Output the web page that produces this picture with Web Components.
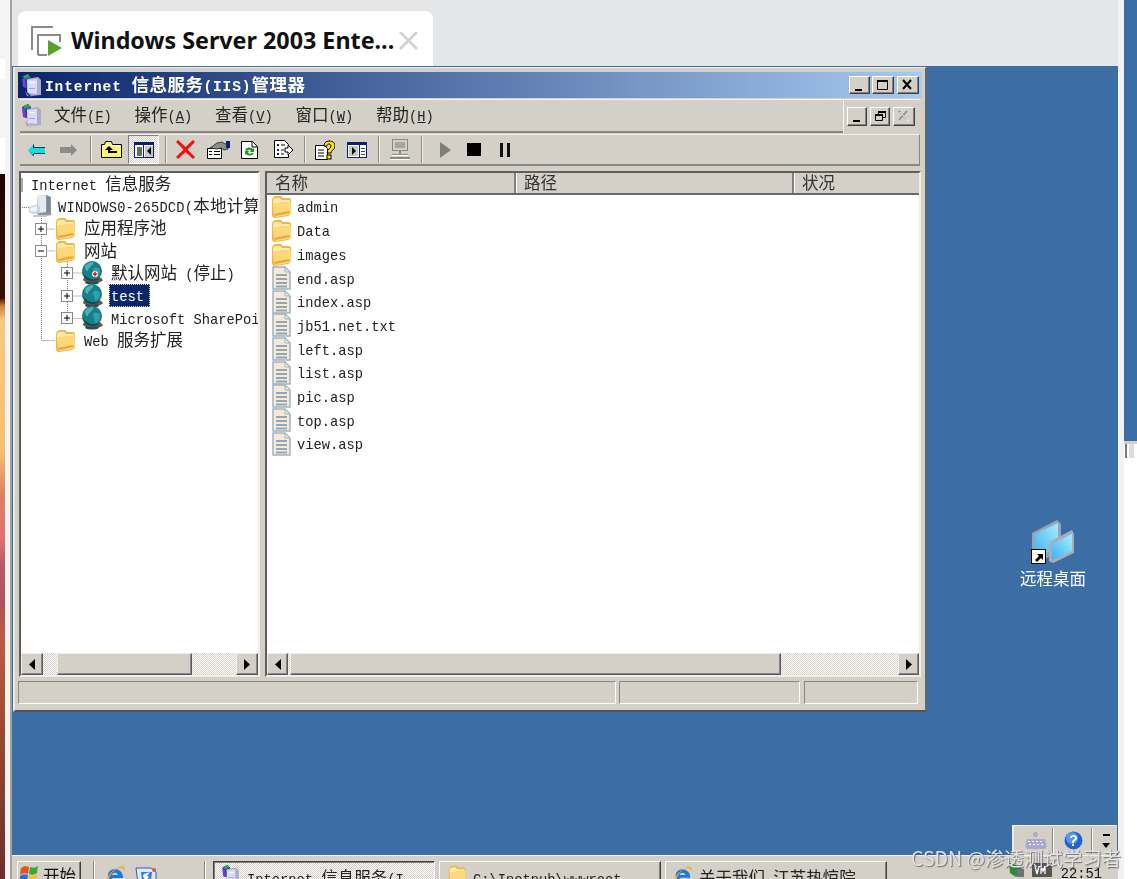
<!doctype html>
<html>
<head>
<meta charset="utf-8">
<title>Windows Server 2003 - IIS</title>
<style>
  html, body { margin: 0; padding: 0; width: 1137px; height: 879px; overflow: hidden; background: #fff; }
</style>
</head>
<body>
<rdp-screen>
  <side-strip slot="left"></side-strip>
  <session-tab slot="top" text="Windows Server 2003 Ente..."></session-tab>
  <win-desktop slot="desktop">
    <win-window>
      <win-titlebar text="Internet 信息服务(IIS)管理器"></win-titlebar>
      <win-menubar>
        <win-menuitem text="文件(&F)" style="margin-left:12px"></win-menuitem>
        <win-menuitem text="操作(&A)"></win-menuitem>
        <win-menuitem text="查看(&V)"></win-menuitem>
        <win-menuitem text="窗口(&W)"></win-menuitem>
        <win-menuitem text="帮助(&H)"></win-menuitem>
      </win-menubar>
      <win-toolbar>
        <win-tool icon="back" style="margin-left:8px"></win-tool>
        <win-tool icon="forward" style="margin-left:15px"></win-tool>
        <win-tool icon="sep" style="margin-left:13px"></win-tool>
        <win-tool icon="up" style="margin-left:9px"></win-tool>
        <win-tool icon="tree" pressed style="margin-left:6px"></win-tool>
        <win-tool icon="sep" style="margin-left:6px"></win-tool>
        <win-tool icon="del" style="margin-left:9px"></win-tool>
        <win-tool icon="props" style="margin-left:12px"></win-tool>
        <win-tool icon="refresh" style="margin-left:11px"></win-tool>
        <win-tool icon="export" style="margin-left:15px"></win-tool>
        <win-tool icon="sep" style="margin-left:11px"></win-tool>
        <win-tool icon="help" style="margin-left:9px"></win-tool>
        <win-tool icon="action" style="margin-left:12px"></win-tool>
        <win-tool icon="sep" style="margin-left:11px"></win-tool>
        <win-tool icon="computer" style="margin-left:9px"></win-tool>
        <win-tool icon="sep" style="margin-left:10px"></win-tool>
        <win-tool icon="play" style="margin-left:17px"></win-tool>
        <win-tool icon="stop" style="margin-left:16px"></win-tool>
        <win-tool icon="pause" style="margin-left:19px"></win-tool>
      </win-toolbar>
      <win-panes>
        <win-tree slot="tree">
          <tree-row level="0" text="Internet 信息服务"></tree-row>
          <tree-row level="1" icon="server" text="WINDOWS0-265DCD(本地计算机)" style="letter-spacing:.2px"></tree-row>
          <tree-row level="2" expander="plus" icon="folder" text="应用程序池"></tree-row>
          <tree-row level="2" expander="minus" icon="folder" text="网站"></tree-row>
          <tree-row level="3" expander="plus" icon="globeStopped" text="默认网站 (停止)"></tree-row>
          <tree-row level="3" expander="plus" icon="globe" text="test" selected></tree-row>
          <tree-row level="3" expander="plus" icon="globe" text="Microsoft SharePoint"></tree-row>
          <tree-row level="2" icon="folder" text="Web 服务扩展"></tree-row>
        </win-tree>
        <win-list slot="list">
          <list-row icon="folder" text="admin"></list-row>
          <list-row icon="folder" text="Data"></list-row>
          <list-row icon="folder" text="images"></list-row>
          <list-row icon="doc" text="end.asp"></list-row>
          <list-row icon="doc" text="index.asp"></list-row>
          <list-row icon="doc" text="jb51.net.txt"></list-row>
          <list-row icon="doc" text="left.asp"></list-row>
          <list-row icon="doc" text="list.asp"></list-row>
          <list-row icon="doc" text="pic.asp"></list-row>
          <list-row icon="doc" text="top.asp"></list-row>
          <list-row icon="doc" text="view.asp"></list-row>
        </win-list>
      </win-panes>
      <win-statusbar></win-statusbar>
    </win-window>
    <desktop-icon text="远程桌面"></desktop-icon>
    <lang-bar></lang-bar>
  </win-desktop>
  <win-taskbar slot="taskbar">
    <task-button icon="mmc" text="Internet 信息服务(I" active style="margin-left:8px"></task-button>
    <task-button icon="folder" text="C:\Inetpub\wwwroot"></task-button>
    <task-button icon="ie" text="关于我们-江苏热惊院"></task-button>
  </win-taskbar>
  <right-strip slot="right"></right-strip>
</rdp-screen>
<csdn-mark>CSDN @渗透测试学习者</csdn-mark>

<script>
// Mono grid of the old SimSun UI font: latin cell 8.25px, CJK cell 16.5px
const UI_FONT = `
  .t { white-space: pre; font: 13.75px/1 "Liberation Mono", monospace; }
  .t::before { content: "\\200b"; font: 16.5px/1 "Noto Sans CJK SC", sans-serif; }
  .t .c { font: 16.5px/1 "Noto Sans CJK SC", sans-serif; }
  .t u { text-underline-offset: 1px; }
`;

function mix(text) {
  return text
    .replace(/&(.)/g, '<u>$1</u>')
    .replace(/[\u3000-\u9fff\uff00-\uffef]+/g, (m) => `<span class="c">${m}</span>`);
}

const svg = (w, h, body) => `<svg width="${w}" height="${h}" viewBox="0 0 ${w} ${h}" style="display:block;flex:none">${body}</svg>`;

const GLOBE = `
  <path d="M3 16c3 2 13 2 16 0l3 3c-2 4-17 4-20 0z" fill="#6b5a3c"/>
  <path d="M5 20c3 1 9 1 12 0l1 2c-3 2-11 2-14 0z" fill="#2f4a58"/>
  <circle cx="11" cy="10" r="10" fill="#16808a"/>
  <path d="M4 5c2-3 5-4 8-4 1 1 0 3-2 4-1 2-3 2-3 5-2 0-3-2-3-5z" fill="#4eb0b4"/>
  <path d="M13 7c2-1 5 0 6 2 0 3-1 6-4 8-2-1-1-4-2-5-1-2-1-4 0-5z" fill="#36a0a6"/>
  <path d="M1 11c1 5 5 9 10 9 4 0 6-1 8-4-3 3-10 3-13 0-2-1-4-3-5-5z" fill="#0a4a56"/>`;

const ICONS = {
  mmc: svg(20, 23, `
    <path d="M0 3 6 0 9 3 9 13 3 14z" fill="#2a3fb0"/>
    <path d="M1 2 6 0 8 3 3 5z" fill="#27a558"/>
    <path d="M0 5 3 5 4 14 1 13z" fill="#7a3fc0"/>
    <path d="M5 5 16 3 19 6 19 21 9 22 5 18z" fill="#a9adc9"/>
    <path d="M5 6 15 5 15 20 6 19z" fill="#d9dcf4"/>
    <rect x="7" y="8" width="6" height="1" fill="#fff"/>
    <rect x="7" y="14" width="6" height="1" fill="#a0a6d0"/>
    <path d="M3 17 7 22 12 23 5 22z" fill="#c070d0"/>`),
  back: svg(17, 12, `<path d="M6 0v3h11v6H6v3L0 6z" fill="#0ce0e8"/><path d="M6 0v3h11v1H5V1zM0 6l6 6V9h11v1H5v2z" fill="#06334a"/>`),
  forward: svg(17, 12, `<path d="M11 0v3H0v6h11v3l6-6z" fill="#8c8c8c"/>`),
  sep: svg(2, 27, `<rect width="1" height="27" fill="#8f8c86"/><rect x="1" width="1" height="27" fill="#f4f2ee"/>`),
  up: svg(21, 17, `
    <path d="M.5 3.5h3l1-3h6l1 3h9v13H.5z" fill="#fcf377" stroke="#000"/>
    <path d="M2 4h17v1H2z" fill="#fff"/>
    <path d="M8 5 4 9h3v3h9v-2H9V9h3z" fill="#000"/>`),
  tree: svg(20, 16, `
    <rect x=".5" y=".5" width="19" height="15" fill="#fff" stroke="#0a1f7a"/>
    <rect x="1" y="1" width="18" height="2" fill="#0a1f7a"/>
    <rect x="3" y="5" width="5" height="9" fill="#6a6a6a"/>
    <rect x="9" y="3" width="1" height="12" fill="#0a1f7a"/>
    <rect x="11" y="4" width="8" height="11" fill="#c9c7c1"/>
    <path d="M17 5v8l-4-4z" fill="#000"/>`),
  del: svg(19, 19, `<path d="M2 0l7.5 7L17 0l2 2-7.500 7.500L19 17l-2 2-7.500-7L2 19l-2-2 7.500-7.500L0 2z" fill="#f01010"/>`),
  props: svg(23, 18, `
    <path d="M.5 7.500h14v10H.5z" fill="#fff" stroke="#000"/>
    <path d="M2 10h3v1H2zM7 10h6v1H7zM2 13h3v1H2zM7 13h6v1H7z" fill="#000"/>
    <path d="M3 7 10 2l5-1 3 2 3-1v6l-4 1-3-2-4 1z" fill="#8e8e8e" stroke="#222" stroke-width=".8"/>
    <rect x="19" y="0" width="4" height="7" fill="#10207a"/>`),
  refresh: svg(18, 18, `
    <path d="M.5.5h11l5 5v12H.5z" fill="#fff" stroke="#000"/>
    <path d="M11 1v5h5" fill="none" stroke="#000"/>
    <path d="M4 9a5 5 0 0 1 8-1l1-1v4H9l1-1.500A3 3 0 0 0 6 10z" fill="#12a018"/>
    <path d="M13 12a5 5 0 0 1-8 1l-1 1v-4h4l-1 1.500A3 3 0 0 0 11 12z" fill="#12a018"/>`),
  export: svg(19, 19, `
    <path d="M.5.5h10l4 4v13H.5z" fill="#fff" stroke="#000"/>
    <path d="M3 4h2v2H3zM3 9h2v2H3zM3 13h2v2H3z" fill="#10207a"/>
    <path d="M7 5h4M7 10h3M7 14h3" stroke="#000"/>
    <path d="M11 8h3V5l5 5-5 5v-3h-3z" fill="#fff" stroke="#000"/>`),
  help: svg(20, 20, `
    <path d="M.5 5.500h9l3 3v11H.5z" fill="#fff" stroke="#000"/>
    <path d="M3 10h6M3 13h6M3 16h6" stroke="#000"/>
    <path d="M9 6c0-3 2-5 5-5 4 0 6 2 6 5 0 4-4 4-4 7h-4c0-4 4-4 4-7 0-1-1-2-2-2s-2 1-2 2z" fill="#ffe600" stroke="#000" stroke-width="1"/>
    <rect x="12" y="15" width="4" height="4" fill="#ffe600" stroke="#000"/>`),
  action: svg(20, 16, `
    <rect x=".5" y=".5" width="19" height="15" fill="#fff" stroke="#0a1f7a"/>
    <rect x="1" y="1" width="18" height="2" fill="#0a1f7a"/>
    <rect x="2" y="4" width="9" height="10" fill="#c9c7c1"/>
    <path d="M5 5v8l4-4z" fill="#000"/>
    <rect x="12" y="3" width="1" height="12" fill="#0a1f7a"/>
    <path d="M14 6h4v1h-4zM14 9h4v1h-4zM14 12h4v1h-4z" fill="#444"/>`),
  computer: svg(22, 22, `
    <rect x="3.500" y=".5" width="15" height="11" fill="none" stroke="#8b8b85"/>
    <rect x="6" y="3" width="10" height="6" fill="#a8a59d"/>
    <path d="M10 12h2v3h-2zM3 15h16v1H3zM1 18h20v2H1z" fill="#8b8b85"/>
    <path d="M3 16h16v1H3zM1 20h20v1H1z" fill="#fff"/>`),
  play: svg(11, 16, `<path d="M0 0l11 8-11 8z" fill="#807e79"/>`),
  stop: svg(14, 13, `<rect width="14" height="13" fill="#000"/>`),
  pause: svg(10, 14, `<rect width="3" height="14" fill="#111"/><rect x="7" width="3" height="14" fill="#111"/>`),
  server: svg(23, 22, `
    <path d="M8 1 18 0 22 2 22 20 12 22 8 19z" fill="#8c96a4"/>
    <path d="M8 1 17 0 17 17 9 18z" fill="#e6eaf0"/>
    <path d="M18 2h3v16h-3z" fill="#7a8a96"/>
    <path d="M0 12 9 9 11 12 11 18 3 19 0 17z" fill="#cbd3dc"/>
    <path d="M1 13 8 11 8 16 2 17z" fill="#f2f4f8"/>
    <path d="M4 20h14v2H4z" fill="#c0cad2"/>`),
  folder: svg(21, 23, `
    <path d="M1 5c0-2 2-4 4-4h5c1 0 1 2 3 2h5c1 0 2 1 2 2v13c0 2-2 2-3 3l-13 2c-2 0-3-1-3-3z" fill="#f0b848"/>
    <path d="M2 6c0-2 1-3 3-3h4l2 2h7c1 0 1 1 1 2l-13 1c-2 0-3 1-4 2z" fill="#fdeaa8"/>
    <path d="M2 10c0-1 2-2 4-2l13-1c1 0 1 1 1 2v9c0 1-1 1-2 2l-13 2c-1 0-2-1-2-2z" fill="#fbd878"/>
    <path d="M3 19l15-3 1 2-15 3z" fill="#e9a838"/>`),
  doc: svg(21, 24, `
    <path d="M2 1h12l5 5v17H2z" fill="#f6ead6" stroke="#9fb4c2" stroke-width="1.500"/>
    <path d="M14 1v5h5z" fill="#dde8ef" stroke="#9fb4c2"/>
    <path d="M5 9h11M5 13h11M5 17h11M5 20.500h11" stroke="#8fa6b6" stroke-width="1.800"/>`),
  globe: svg(22, 24, GLOBE),
  globeStopped: svg(22, 24, GLOBE + `<circle cx="14" cy="13" r="3" fill="#fff"/><path d="M14 10l1 2 2 1-2 1-1 2-1-2-2-1 2-1z" fill="#e01818"/>`),
  plus: svg(12, 12, `<rect x=".5" y=".5" width="11" height="11" fill="#fff" stroke="#8a8a8a"/><path d="M3 6h6M6 3v6" stroke="#000"/>`),
  minus: svg(12, 12, `<rect x=".5" y=".5" width="11" height="11" fill="#fff" stroke="#8a8a8a"/><path d="M3 6h6" stroke="#000"/>`),
  flag: svg(19, 18, `
    <path d="M1 3c3-2 5-2 8-1l-1 7c-3-1-5-1-8 1z" fill="#e8501c"/>
    <path d="M10 2c3 1 5 1 8-1l-1 7c-3 2-5 2-8 1z" fill="#3aa830"/>
    <path d="M0 11c3-2 5-2 8-1l-1 7c-3-1-5-1-8 1z" fill="#2a70d8"/>
    <path d="M9 10c3 1 5 1 8-1l-1 7c-3 2-5 2-8 1z" fill="#f4c020"/>`),
  ie: svg(21, 20, `
    <path d="M10 4a8 8 0 0 1 8 9H7c1 3 6 3 8 1h3c-3 6-14 5-15-2C2 8 5 4 10 4zm-3 6h6c-1-3-5-3-6 0z" fill="#1e78d8"/>
    <path d="M2 16C0 12 10 2 17 1c3 0 3 3 2 5-1-2-2-3-5-3C9 4 3 12 4 17c-1 1-2 0-2-1z" fill="#f0b020" opacity=".85"/>`),
  launch: svg(22, 20, `
    <path d="M1 3h15l5 4v12H3z" fill="#dfe9fa" stroke="#2c5ec0"/>
    <path d="M6 7h11l-1 8H7z" fill="#3a78e0"/>
    <path d="M9 9a3 3 0 1 0 5 3l-2-1 3-4z" fill="#fff"/>
    <circle cx="19" cy="5" r="2" fill="#e05a28"/>`),
  shield: svg(18, 14, `<path d="M1 0l7 2 6-1-1 8-5 5-6-4z" fill="#2f8a3c"/><path d="M9 6h7v8H9z" fill="#6c7480"/>`),
  vm: svg(20, 14, `<rect width="20" height="14" fill="#555"/><path d="M3 3l2 8 2-8M9 11V3l2 5 2-5v8" stroke="#fff" fill="none" stroke-width="1.300"/>`),
  keyboard: svg(22, 18, `
    <path d="M9 1h3v3H9z" fill="none" stroke="#8e8eb4"/>
    <path d="M2 7h18l2 7-2 3H2l-2-3z" fill="#a9a9d6"/>
    <path d="M3 9h2v1H3zM7 9h2v1H7zM11 9h2v1h-2zM15 9h2v1h-2zM4 12h2v1H4zM8 12h2v1H8zM12 12h2v1h-2zM16 12h2v1h-2z" fill="#fff"/>`),
  helpRound: svg(19, 19, `<circle cx="9.500" cy="9.500" r="9" fill="#1c64d8"/><circle cx="8" cy="7" r="6" fill="#5a96ec"/><path d="M6 7c0-4 7-4 7 0 0 3-3 2-3 5H8c0-4 3-3 3-5s-3-2-3 0zM8 13h2v2H8z" fill="#fff"/>`),
  rdp: svg(44, 44, `
    <defs><linearGradient id="r1" x1="0" y1="1" x2="1" y2="0"><stop offset="0" stop-color="#3ab4f0"/><stop offset="1" stop-color="#a8ecff"/></linearGradient></defs>
    <path d="M1 13 26 0 30 4 30 31 8 42 1 40z" fill="#98a4b4"/>
    <path d="M4 14 27 3 27 28 4 38z" fill="url(#r1)"/>
    <path d="M18 22 41 10 43 14 43 33 22 43 18 41z" fill="#a4aebc"/>
    <path d="M21 24 41 14 41 31 21 40z" fill="url(#r1)"/>
    <rect x=".5" y="29.500" width="14" height="14" fill="#fff" stroke="#000"/>
    <path d="M4 40l4-4-2-2h6v6l-2-2-4 4z" fill="#000"/>`),
  session: svg(31, 30, `
    <path d="M22 1H1v23M7 29V9h22v7M7 29h9" fill="none" stroke="#8a8a8a" stroke-width="2"/>
    <path d="M17 14l14 8-14 8z" fill="#5aa02c"/>`),
};

function simple(name, css, html) {
  customElements.define(name, class extends HTMLElement {
    constructor() {
      super();
      this.attachShadow({ mode: 'open' });
    }
    connectedCallback() {
      if (this.shadowRoot.firstChild) return;
      const a = (k) => this.getAttribute(k);
      this.shadowRoot.innerHTML = `<style>${UI_FONT}${css}</style>${typeof html === 'function' ? html(a) : html}`;
    }
  });
}

simple('rdp-screen', `
  :host { display: grid; width: 1137px; height: 879px; overflow: hidden; filter: blur(.35px);
    grid-template-columns: 12px 1106px 19px; grid-template-rows: 66px 789px 24px; }
  ::slotted([slot=left]) { grid-row: 1 / 4; }
  ::slotted([slot=right]) { grid-column: 3; grid-row: 1 / 4; }
  ::slotted([slot=top]) { grid-column: 2; grid-row: 1; }
  ::slotted([slot=desktop]) { grid-column: 2; grid-row: 2; }
  ::slotted([slot=taskbar]) { grid-column: 2; grid-row: 3; }
`, `<slot name="left"></slot><slot name="top"></slot><slot name="desktop"></slot><slot name="taskbar"></slot><slot name="right"></slot>`);

simple('side-strip', `
  :host { display: flex; background: #f4f4f4; }
  .pic { width: 5px; background: linear-gradient(#f4f4f4 0 59px, #fff 59px 79px, #f4f4f4 79px 138px, #fff 138px 174px,
    #1c0504 174px, #3a1005 298px, #d08040 306px, #f8c880 320px, #f8c070 450px, #e08060 494px, #e07070 540px,
    #b85868 565px, #b05060 600px, #c05a40 640px, #9a4a30 730px, #6a2e2e 879px); }
  .gap { width: 5px; background: #f7f5f3; }
  .rule { width: 2px; background: #a2a2a2; }
`, `<div class="pic"></div><div class="gap"></div><div class="rule"></div>`);

simple('right-strip', `
  :host { display: flex; background: #f2f2f2; }
  .gap { width: 6px; }
  .col { width: 13px; display: flex; flex-direction: column; background: #fff; }
  .blue { height: 441px; background: #3a6ea5; flex: none; }
  .edge { height: 3px; background: #d4d0c8; flex: none; }
  .bits { height: 14px; flex: none; display: flex; gap: 2px; }
  .bits i { width: 2px; background: #777; margin-left: 1px; }
  .bits b { width: 5px; background: #ddd; }
`, `<div class="gap"></div><div class="col"><div class="blue"></div><div class="edge"></div><div class="bits"><i></i><b></b></div></div>`);

simple('session-tab', `
  :host { display: block; height: 66px; background: #e5e6e8; padding: 11px 0 0 6px; box-sizing: border-box; }
  .tab { width: 415px; height: 56px; background: #fff; border-radius: 8px 8px 0 0; display: flex; align-items: center;
    padding: 3px 0 0 13px; box-sizing: border-box; }
  .name { font: 700 23.300px/1 "Noto Sans", sans-serif; color: #111; margin-left: 9px; white-space: pre; width: 328px; flex: none; }
`, (a) => `<div class="tab">${ICONS.session}<span class="name">${a('text')}</span>
  <svg width="19" height="18" viewBox="0 0 19 18"><path d="M1 0l17 17M18 0 1 17" stroke="#cfcfcf" stroke-width="2.500"/></svg></div>`);

simple('win-desktop', `
  :host { display: block; position: relative; background: #3a6ea5; }
`, `<slot></slot>`);

// window sits at its own place on the desktop
simple('win-window', `
  :host { position: absolute; left: 1px; top: 1px; width: 914px; height: 645px; box-sizing: border-box;
    display: flex; flex-direction: column; padding: 4px 3px 4px 3px; background: #d4d0c8;
    border-top: 1px solid #eee; border-left: 2px solid #eeeae4; border-right: 2px solid #666; border-bottom: 2px solid #555; }
`, `<slot></slot>`);

simple('win-capbtn', `
  :host { display: block; width: 21px; height: 18px; box-sizing: border-box; background: #d4d0c8; position: relative;
    border: 1px solid; border-color: #fff #404040 #404040 #fff; box-shadow: inset -1px -1px #808080; flex: none; }
  svg { position: absolute; left: 3px; top: 2px; }
`, (a) => {
  const g = { min: '<path d="M2 10h7v2H2z" fill="#000"/>',
    max: '<path d="M1.500 1.500h10v9h-10z" fill="none" stroke="#000"/><path d="M1 1h11v2H1z" fill="#000"/>',
    restore: '<path d="M4.500 1.500h7v6h-7z" fill="none" stroke="#000"/><path d="M1.500 4.500h7v6h-7z" fill="#d4d0c8" stroke="#000"/><path d="M4 1h8v2H4zM1 4h8v2H1z" fill="#000"/>',
    close: '<path d="M2 1l8 9M10 1 2 10" stroke="#000" stroke-width="2"/>',
    closeOff: '<path d="M2 1l8 9M10 1 2 10" stroke="#8a8a84" stroke-width="1.500"/><path d="M3 2l8 9" stroke="#fff"/>' }[a('kind')];
  return `<svg width="13" height="13" viewBox="0 0 13 13">${g}</svg>`;
});

simple('win-titlebar', `
  :host { display: flex; align-items: center; height: 26px; background: linear-gradient(to right, #0a246a, #a6caf0); flex: none; color: #fff; }
  .ic { margin: 0 3px 0 4px; }
  .t { font-weight: 700; flex: 1; font-size: 14.500px; letter-spacing: .9px; }
  .t .c { font-weight: 700; font-size: 17.500px; letter-spacing: .5px; }
  win-capbtn { margin-left: 2px; }
  win-capbtn[kind=close] { margin: 0 3px 0 3px; width: 22px; }
  win-capbtn[kind=max] { width: 22px; }
`, (a) => `<div class="ic">${ICONS.mmc}</div><div class="t">${mix(a('text'))}</div>
  <win-capbtn kind="min"></win-capbtn><win-capbtn kind="max"></win-capbtn><win-capbtn kind="close"></win-capbtn>`);

simple('win-menubar', `
  :host { display: flex; height: 34px; margin: 1px 2px 0 2px; flex: none; box-sizing: border-box; color: #222; }
  .band { width: 823px; display: flex; align-items: center; gap: 23.500px; border-top: 1px solid #f4f2ee; border-bottom: 2px solid #8a8780; box-sizing: border-box; padding-left: 2px; }
  .ic { margin-right: -23.500px; }
  .mdi { flex: 1; display: flex; align-items: center; border-left: 1px solid #f4f2ee; padding-left: 3px; box-sizing: border-box; border-top: 1px solid #f4f2ee; }
  win-capbtn { height: 19px; width: 20px; margin-right: 3px; }
  win-capbtn[kind=closeOff] { width: 22px; }
`, `<div class="band"><div class="ic">${ICONS.mmc}</div><slot></slot></div>
  <div class="mdi"><win-capbtn kind="min"></win-capbtn><win-capbtn kind="restore"></win-capbtn><win-capbtn kind="closeOff"></win-capbtn></div>`);

simple('win-menuitem', `
  :host { display: block; width: 57px; }
`, (a) => `<div class="t">${mix(a('text'))}</div>`);

simple('win-toolbar', `
  :host { display: flex; align-items: center; height: 32px; margin: 1px 2px 0 2px; flex: none; box-sizing: border-box;
    border-bottom: 2px solid #8a8780; border-right: 1px solid #8a8780; border-top: 1px solid #f4f2ee; }
`, `<slot></slot>`);

simple('win-tool', `
  :host { display: flex; align-items: center; justify-content: center; flex: none; }
  :host([pressed]) { width: 31px; height: 29px; box-sizing: border-box; border: 1px solid; border-color: #808080 #fff #fff #808080;
    background: repeating-conic-gradient(#fff 0 25%, #d4d0c8 0 50%) 0 0 / 2px 2px; }
`, (a) => ICONS[a('icon')]);

simple('win-panes', `
  :host { display: flex; gap: 5px; height: 506px; margin: 5px 0 0 1px; flex: none; }
  ::slotted([slot=tree]) { width: 241px; }
  ::slotted([slot=list]) { width: 656px; }
`, `<slot name="tree"></slot><slot name="list"></slot>`);

simple('win-scrollbar', `
  :host { display: flex; height: 22px; flex: none; }
  .btn { flex: none; width: 22px; box-sizing: border-box; background: #d4d0c8; display: flex; align-items: center; justify-content: center;
    border: 1px solid; border-color: #f0eee8 #5a5a5a #5a5a5a #f0eee8; box-shadow: inset -1px -1px #888; }
  .track { background: repeating-conic-gradient(#fff 0 25%, #d4d0c8 0 50%) 0 0 / 2px 2px; flex: none; }
  .thumb { flex: none; box-sizing: border-box; background: #d4d0c8;
    border: 1px solid; border-color: #f0eee8 #5a5a5a #5a5a5a #f0eee8; box-shadow: inset -1px -1px #888; }
`, (a) => `<div class="btn" style="width:${a('btn')}px"><svg width="6" height="11"><path d="M6 0v11L0 5.500z" fill="#000"/></svg></div>
  <div class="track" style="width:${a('before')}px"></div>
  <div class="thumb" style="width:${a('thumb')}px"></div>
  <div class="track" style="flex:1"></div>
  <div class="btn" style="width:${a('btn')}px"><svg width="6" height="11"><path d="M0 0v11l6-5.500z" fill="#000"/></svg></div>`);

const PANE_BOX = `
  :host { display: flex; flex-direction: column; box-sizing: border-box; background: #fff; overflow: hidden;
    border: 2px solid; border-color: #5f5f5f #f0eee8 #f0eee8 #5f5f5f; }
  .body { flex: 1; min-height: 0; position: relative; overflow: hidden; }
`;

simple('win-tree', PANE_BOX + `
  .lines { position: absolute; left: 0; top: 0; }
  .rows { position: relative; z-index: 1; }
`, `<div class="body">
    <svg class="lines" width="237" height="480" fill="none" stroke="#7d7d7d" stroke-dasharray="1 1">
      <rect x="0" y="5" width="2" height="14" fill="#a8a8a8" stroke="none"/>
      <path d="M1 34.500h8M20.500 45v122M20.500 56h14M20.500 78h14M20.500 167.500h14M46.500 89v56M46.500 100h15M46.500 123h15M46.500 145.500h15"/>
    </svg>
    <div class="rows"><slot></slot></div>
  </div>
  <win-scrollbar btn="22" before="14" thumb="135"></win-scrollbar>`);

simple('tree-row', `
  :host { display: block; height: 22.330px; color: #222; }
  .r { display: flex; align-items: center; height: 100%; white-space: pre; }
  .ex { width: 12px; margin-right: 8px; flex: none; }
  .ic { flex: none; }
  .t { flex: none; }
  :host([selected]) .t { background: #0a246a; color: #fff; padding: 2px 6px 2px 2px; margin-left: -2px; outline: 1px dotted #e8d890; outline-offset: -1px; }
`, (a) => {
  const lv = +a('level');
  const left = [10, 8, 14, 40][lv];
  const ex = lv >= 2 ? `<div class="ex">${a('expander') ? ICONS[a('expander')] : ''}</div>` : '';
  const ic = a('icon') ? `<div class="ic" style="margin-right:${lv === 1 ? 6 : 8}px">${ICONS[a('icon')]}</div>` : '';
  return `<div class="r" style="padding-left:${left}px">${ex}${ic}<div class="t">${mix(a('text'))}</div></div>`;
});

simple('win-list', PANE_BOX + `
  .head { display: flex; height: 22px; flex: none; background: #d4d0c8; border-bottom: 2px solid #686868; box-sizing: border-box; color: #333; }
  .h { box-sizing: border-box; display: flex; align-items: center; padding: 1px 0 0 8px; border-right: 2px solid #808080; box-shadow: 1px 0 #fff; }
  .h:last-child { flex: 1; border-right: 0; box-shadow: none; }
`, `<div class="head">
    <div class="h" style="width:249px"><span class="t">${mix('名称')}</span></div>
    <div class="h" style="width:278px"><span class="t">${mix('路径')}</span></div>
    <div class="h"><span class="t">${mix('状况')}</span></div>
  </div>
  <div class="body"><slot></slot></div>
  <win-scrollbar btn="21" before="2" thumb="491"></win-scrollbar>`);

simple('list-row', `
  :host { display: flex; align-items: center; height: 23.700px; padding-left: 4px; gap: 5px; color: #222; }
`, (a) => `${ICONS[a('icon')]}<div class="t">${mix(a('text'))}</div>`);

simple('win-statusbar', `
  :host { display: flex; gap: 3px; height: 25px; margin-top: 3px; padding: 1px 0; box-sizing: border-box; flex: none; }
  div { box-sizing: border-box; height: 100%; border: 1px solid; border-color: #8a8780 #fff #fff #8a8780; }
`, `<div style="width:598px"></div><div style="width:181px"></div><div style="width:114px;margin-left:1px"></div>`);

simple('desktop-icon', `
  :host { position: absolute; left: 1001px; top: 454px; width: 80px; display: flex; flex-direction: column; align-items: center; gap: 4px; color: #fff; }
  .n { font: 16.500px/20px "Noto Sans CJK SC", sans-serif; white-space: pre; }
`, (a) => `${ICONS.rdp}<div class="n">${a('text')}</div>`);

// language bar floats above the taskbar, at the desktop's lower right corner
simple('lang-bar', `
  :host { position: absolute; right: 1px; bottom: 0; width: 105px; height: 30px; background: #d4d0c8; box-sizing: border-box;
    border-left: 2px solid #eeeae4; border-top: 1px solid #eeeae4; display: flex; align-items: center; }
  .k { margin-left: 11px; }
  .s { width: 1px; height: 26px; background: #fff; box-shadow: -1px 0 #8a8780; margin-left: 6px; }
  .q { margin-left: 10px; }
  .s2 { margin-left: 9px; }
  .d { margin-left: 9px; display: flex; flex-direction: column; align-items: center; gap: 7px; }
  .d i { display: block; width: 7px; height: 2px; background: #000; }
  .d b { display: block; width: 0; border: 4px solid transparent; border-top: 5px solid #000; border-bottom: 0; }
`, `<div class="k">${ICONS.keyboard}</div><div class="s"></div><div class="q">${ICONS.helpRound}</div><div class="s s2"></div><div class="d"><i></i><b></b></div>`);

simple('win-taskbar', `
  :host { display: flex; align-items: flex-start; height: 24px; background: #d4d0c8; border-top: 1px solid #f4f2ee; box-sizing: border-box; overflow: hidden; padding: 5px 0 0 5px; }
  .start { flex: none; width: 64px; height: 30px; box-sizing: border-box; border: 1px solid; border-color: #fff #404040 #404040 #fff;
    box-shadow: inset -1px -1px #808080; display: flex; align-items: flex-start; padding: 3px 0 0 2px; gap: 4px; color: #111; }
  .sep { flex: none; width: 1px; height: 30px; background: #8a8780; box-shadow: 1px 0 #fff; }
  .ql { margin-left: 11px; margin-top: 4px; flex: none; }
  .tray { margin-left: auto; display: flex; align-items: flex-start; padding-top: 2px; flex: none; color: #111; }
  .time { margin: 0 16px 0 9px; }
`, `<div class="start">${ICONS.flag}<span class="t" style="padding-top:2px">${mix('开始')}</span></div>
  <div class="sep" style="margin-left:12px"></div>
  <div class="ql">${ICONS.ie}</div><div class="ql" style="margin-left:9px">${ICONS.launch}</div>
  <div class="sep" style="margin-left:47px"></div>
  <slot></slot>
  <div class="tray"><div>${ICONS.shield}</div><div style="margin-left:6px">${ICONS.vm}</div><div class="t time">22:51</div></div>`);

simple('task-button', `
  :host { display: block; flex: none; width: 222px; height: 30px; box-sizing: border-box; margin-right: 4px; border: 1px solid; border-color: #fff #404040 #404040 #fff; box-shadow: inset -1px -1px #808080; color: #222; }
  :host([active]) { border-color: #404040 #fff #fff #404040; box-shadow: inset 1px 1px #808080;
    background: repeating-conic-gradient(#fff 0 25%, #d4d0c8 0 50%) 0 0 / 2px 2px; }
  .r { display: flex; align-items: flex-start; gap: 6px; padding: 3px 0 0 7px; }
  .t { padding-top: 4px; }
  svg { width: 20px; height: 20px; }
`, (a) => `<div class="r">${ICONS[a('icon')]}<div class="t">${mix(a('text'))}</div></div>`);

// watermark printed over the whole picture
simple('csdn-mark', `
  :host { position: absolute; left: 911px; top: 846px; font: 19.500px/24px "Noto Sans CJK SC", "Noto Sans", sans-serif; color: #e2e2e2; white-space: pre;
    text-shadow: 1px 1px 1px rgba(70,70,70,.7); }
`, `<slot></slot>`);
</script>
</body>
</html>
